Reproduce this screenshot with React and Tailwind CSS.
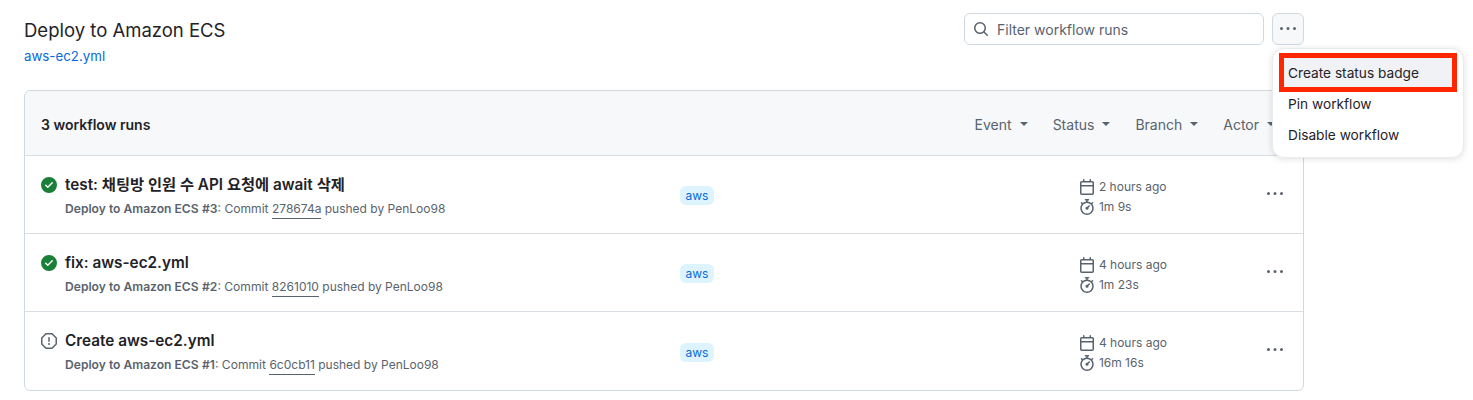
const Octicon = ({ d, size = 16, className = "" }) => (
  <svg width={size} height={size} viewBox="0 0 16 16" fill="currentColor" className={`shrink-0 ${className}`}>
    <path d={d} />
  </svg>
);

const CHECK = "M8 16A8 8 0 1 1 8 0a8 8 0 0 1 0 16Zm3.78-9.72a.751.751 0 0 0-.018-1.042.751.751 0 0 0-1.042-.018L6.75 9.19 5.28 7.72a.751.751 0 0 0-1.042.018.751.751 0 0 0-.018 1.042l2 2a.75.75 0 0 0 1.06 0Z";
const STOP = "M4.47.22A.749.749 0 0 1 5 0h6c.199 0 .389.079.53.22l4.25 4.25c.141.14.22.331.22.53v6a.749.749 0 0 1-.22.53l-4.25 4.25A.749.749 0 0 1 11 16H5a.749.749 0 0 1-.53-.22L.22 11.53A.749.749 0 0 1 0 11V5c0-.199.079-.389.22-.53Zm.84 1.28L1.5 5.31v5.38l3.81 3.81h5.38l3.81-3.81V5.31L10.69 1.5ZM8 4a.75.75 0 0 1 .75.75v3.5a.75.75 0 0 1-1.5 0v-3.5A.75.75 0 0 1 8 4Zm0 8a1 1 0 1 1 0-2 1 1 0 0 1 0 2Z";
const CAL = "M4.75 0a.75.75 0 0 1 .75.75V2h5V.75a.75.75 0 0 1 1.5 0V2h1.25c.966 0 1.75.784 1.75 1.75v10.5A1.75 1.75 0 0 1 13.25 16H2.75A1.75 1.75 0 0 1 1 14.25V3.75C1 2.784 1.784 2 2.75 2H4V.75A.75.75 0 0 1 4.75 0ZM2.5 7.5v6.75c0 .138.112.25.25.25h10.5a.25.25 0 0 0 .25-.25V7.5Zm10.75-4H2.75a.25.25 0 0 0-.25.25V6h11V3.75a.25.25 0 0 0-.25-.25Z";
const WATCH = "M5.75.75A.75.75 0 0 1 6.5 0h3a.75.75 0 0 1 0 1.5h-.75v1l-.001.041a6.724 6.724 0 0 1 3.464 1.435l.007-.006.75-.75a.75.75 0 1 1 1.06 1.06l-.75.75-.006.007a6.75 6.75 0 1 1-10.548 0L2.72 5.03l-.75-.75a.75.75 0 0 1 1.06-1.06l.75.75.007.006A6.72 6.72 0 0 1 7.251 2.54l-.001-.04v-1H6.5a.75.75 0 0 1-.75-.75ZM8 14.5a5.25 5.25 0 1 0-.001-10.501A5.25 5.25 0 0 0 8 14.5Zm.389-6.7 1.33-1.33a.75.75 0 1 1 1.061 1.06L9.45 8.861A1.503 1.503 0 0 1 8 10.75a1.499 1.499 0 1 1 .389-2.95Z";
const SEARCH = "M10.68 11.74a6 6 0 0 1-7.922-8.982 6 6 0 0 1 8.982 7.922l3.04 3.04a.749.749 0 0 1-.326 1.275.749.749 0 0 1-.734-.215ZM11.5 7a4.499 4.499 0 1 0-8.997 0A4.499 4.499 0 0 0 11.5 7Z";
const KEBAB = "M8 9a1.5 1.5 0 1 0 0-3 1.5 1.5 0 0 0 0 3ZM1.5 9a1.5 1.5 0 1 0 0-3 1.5 1.5 0 0 0 0 3Zm13 0a1.5 1.5 0 1 0 0-3 1.5 1.5 0 0 0 0 3Z";

const runs = [
  { icon: CHECK, color: "text-[#1a7f37]", title: "test: 채팅방 인원 수 API 요청에 await 삭제", num: "#3", sha: "278674a", when: "2 hours ago", took: "1m 9s", h: "h-[78px]" },
  { icon: CHECK, color: "text-[#1a7f37]", title: "fix: aws-ec2.yml", num: "#2", sha: "8261010", when: "4 hours ago", took: "1m 23s", h: "h-[78px]" },
  { icon: STOP, color: "text-[#59636e]", title: "Create aws-ec2.yml", num: "#1", sha: "6c0cb11", when: "4 hours ago", took: "16m 16s", h: "h-[79px]" },
];

const Filter = ({ label }) => (
  <span className="flex items-center gap-[8px] text-[14px] text-[#59636e]">
    {label}
    <span className="w-0 h-0 border-x-[4px] border-x-transparent border-t-[4px] border-t-[#59636e]" />
  </span>
);

export default function App() {
  return (
    <div className="relative h-[400px] w-[1473px] overflow-hidden bg-white px-[24px] pt-[16px] font-['Inter','Noto_Sans_CJK_KR',sans-serif] text-[#1f2328]">
      <div className="flex w-[1280px] justify-between">
        <div>
          <h1 className="text-[18.5px] leading-[28px] font-normal">Deploy to Amazon ECS</h1>
          <a className="block mt-[2px] text-[13.3px] leading-[20px] text-[#0969da]">aws-ec2.yml</a>
        </div>
        <div className="flex gap-[8px] mt-[-3px] h-[32px]">
          <div className="flex w-[300px] items-center gap-[8px] rounded-[6px] border border-[#d1d9e0] px-[8px] text-[14px] text-[#59636e]">
            <Octicon d={SEARCH} className="text-[#59636e]" />
            Filter workflow runs
          </div>
          <div className="flex w-[32px] items-center justify-center rounded-[6px] border border-[#d1d9e0] bg-[#f6f8fa] text-[#59636e]">
            <Octicon d={KEBAB} />
          </div>
        </div>
      </div>

      <div className="mt-[24px] w-[1280px] rounded-[6px] border border-[#d1d9e0]">
        <div className="flex h-[64px] items-center justify-between rounded-t-[6px] bg-[#f6f8fa] pl-[16px] pr-[28px] pt-[2px]">
          <span className="text-[14px] font-semibold">3 workflow runs</span>
          <div className="flex gap-[25px]">
            <Filter label="Event" />
            <Filter label="Status" />
            <Filter label="Branch" />
            <Filter label="Actor" />
          </div>
        </div>
        {runs.map((r) => (
          <div key={r.num} className={`flex items-center border-t border-[#d8dee4] pl-[16px] pr-[20px] ${r.h}`}>
            <div className="flex w-[639px] shrink-0 gap-[8px] self-start mt-[17px]">
              <Octicon d={r.icon} className={`mt-[4px] ${r.color}`} />
              <div>
                <div className="text-[15.3px] leading-[24px] font-semibold">{r.title}</div>
                <div className="mt-[2px] text-[12.1px] leading-[20px] text-[#59636e]">
                  <span className="font-semibold">Deploy to Amazon ECS</span>{" "}
                  <span className="font-semibold">{r.num}</span>: Commit{" "}
                  <span className="text-[12px]"><span className="border-b border-[#59636e] pb-[2px]">{r.sha}</span> pushed by PenLoo98</span>
                </div>
              </div>
            </div>
            <span className="mt-[2px] rounded-[6px] bg-[#ddf4ff] px-[5.5px] text-[12px] leading-[19px] text-[#0969da]">aws</span>
            <div className="ml-[365px] w-[188px] shrink-0 self-start mt-[21px] text-[12px] leading-[20px] text-[#59636e]">
              <div className="flex items-center gap-[4px]"><Octicon d={CAL} /><span>{r.when}</span></div>
              <div className="flex items-center gap-[4px]"><Octicon d={WATCH} /><span>{r.took}</span></div>
            </div>
            <Octicon d={KEBAB} className="text-[#59636e] mt-[-2px]" />
          </div>
        ))}
      </div>

      <div className="absolute left-[1272px] top-[48px] w-[192px] rounded-[12px] border border-[#e8ebef] bg-white px-[7px] pt-[9px] pb-[6px] text-[13.7px] shadow-[0_1px_6px_rgba(31,35,40,0.14)]">
        <div className="flex h-[31px] items-center rounded-[6px] bg-[#f0f2f5] px-[8px]">Create status badge</div>
        <div className="flex h-[31px] items-center px-[8px]">Pin workflow</div>
        <div className="flex h-[31px] items-center px-[8px]">Disable workflow</div>
      </div>
      <div className="absolute left-[1279px] top-[53px] h-[39px] w-[178px] border-[5px] border-[#ff2600]" />
    </div>
  );
}
